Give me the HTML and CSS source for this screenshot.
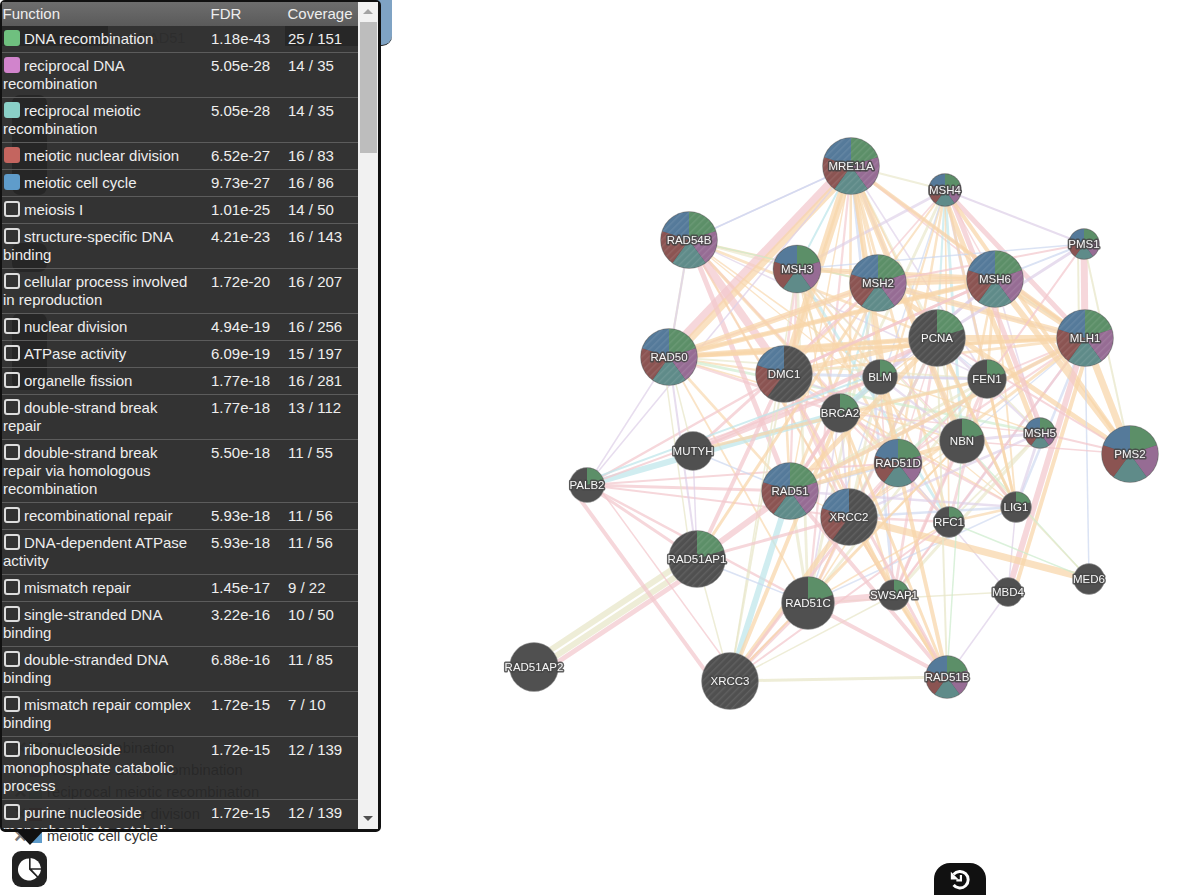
FILE: index.html
```html
<!DOCTYPE html>
<html lang="en">
<head>
  <meta charset="UTF-8">
  <meta name="viewport" content="width=device-width, initial-scale=1">
  <title>Gene Network</title>
  <link rel="stylesheet" href="styles.css">
</head>
<body>

  <div class="app">
    <!-- network canvas, filled in by script.js -->
    <svg id="network" class="network" width="1196" height="895" viewBox="0 0 1196 895"></svg>

    <div class="search">
      <div class="search-tools"></div>
      <div class="search-box">e.g. RAD51</div>
      <div class="search-go"></div>
    </div>

    <div class="side">
      <div class="tool tool-a"></div>
      <div class="tool tool-b"></div>
      <div class="tool tool-c"></div>

      <ul class="legend">
        <li><span class="cross">×</span><i class="chip green"></i>DNA recombination</li>
        <li><span class="cross">×</span><i class="chip purple"></i>reciprocal DNA recombination</li>
        <li><span class="cross">×</span><i class="chip teal"></i>reciprocal meiotic recombination</li>
        <li><span class="cross">×</span><i class="chip red"></i>meiotic nuclear division</li>
        <li><span class="cross">×</span><i class="chip blue"></i>meiotic cell cycle</li>
      </ul>

      <button class="pie-btn" aria-label="Functions">
        <svg width="24" height="24" viewBox="0 0 24 24">
          <path fill="#fff" d="M11 1.5V12.5L18.8 20.2A11 11 0 1 1 11 1.5Z"/>
          <path fill="#fff" d="M12.6 1A11 11 0 0 1 23 11.2H12.6Z"/>
          <path fill="#fff" d="M14 12.8H23A11 11 0 0 1 20 19.2Z"/>
        </svg>
      </button>
    </div>

    <button class="restore" aria-label="Restore">
      <svg width="24" height="24" viewBox="0 0 24 24">
        <path fill="none" stroke="#fff" stroke-width="3.2" d="M5 18.5A9 9 0 1 0 5 7"/>
        <path fill="#fff" d="M2 4V12.5H10.5Z"/>
        <path fill="none" stroke="#fff" stroke-width="2.4" d="M13 7.5V13.5H8"/>
      </svg>
    </button>

    <div class="panel">
      <div class="table-wrap">
        <table class="fn-table">
          <colgroup>
            <col class="col-fn">
            <col class="col-fdr">
            <col class="col-cov">
          </colgroup>
          <thead>
            <tr><th>Function</th><th>FDR</th><th>Coverage</th></tr>
          </thead>
          <tbody>
            <tr><td><i class="box green"></i>DNA recombination</td><td>1.18e-43</td><td>25 / 151</td></tr>
            <tr><td><i class="box purple"></i>reciprocal DNA recombination</td><td>5.05e-28</td><td>14 / 35</td></tr>
            <tr><td><i class="box teal"></i>reciprocal meiotic recombination</td><td>5.05e-28</td><td>14 / 35</td></tr>
            <tr><td><i class="box red"></i>meiotic nuclear division</td><td>6.52e-27</td><td>16 / 83</td></tr>
            <tr><td><i class="box blue"></i>meiotic cell cycle</td><td>9.73e-27</td><td>16 / 86</td></tr>
            <tr><td><i class="box"></i>meiosis I</td><td>1.01e-25</td><td>14 / 50</td></tr>
            <tr><td><i class="box"></i>structure-specific DNA binding</td><td>4.21e-23</td><td>16 / 143</td></tr>
            <tr><td><i class="box"></i>cellular process involved in reproduction</td><td>1.72e-20</td><td>16 / 207</td></tr>
            <tr><td><i class="box"></i>nuclear division</td><td>4.94e-19</td><td>16 / 256</td></tr>
            <tr><td><i class="box"></i>ATPase activity</td><td>6.09e-19</td><td>15 / 197</td></tr>
            <tr><td><i class="box"></i>organelle fission</td><td>1.77e-18</td><td>16 / 281</td></tr>
            <tr><td><i class="box"></i>double-strand break repair</td><td>1.77e-18</td><td>13 / 112</td></tr>
            <tr><td><i class="box"></i>double-strand break repair via homologous recombination</td><td>5.50e-18</td><td>11 / 55</td></tr>
            <tr><td><i class="box"></i>recombinational repair</td><td>5.93e-18</td><td>11 / 56</td></tr>
            <tr><td><i class="box"></i>DNA-dependent ATPase activity</td><td>5.93e-18</td><td>11 / 56</td></tr>
            <tr><td><i class="box"></i>mismatch repair</td><td>1.45e-17</td><td>9 / 22</td></tr>
            <tr><td><i class="box"></i>single-stranded DNA binding</td><td>3.22e-16</td><td>10 / 50</td></tr>
            <tr><td><i class="box"></i>double-stranded DNA binding</td><td>6.88e-16</td><td>11 / 85</td></tr>
            <tr><td><i class="box"></i>mismatch repair complex binding</td><td>1.72e-15</td><td>7 / 10</td></tr>
            <tr><td><i class="box"></i>ribonucleoside monophosphate catabolic process</td><td>1.72e-15</td><td>12 / 139</td></tr>
            <tr><td><i class="box"></i>purine nucleoside monophosphate catabolic process</td><td>1.72e-15</td><td>12 / 139</td></tr>
          </tbody>
        </table>
      </div>
      <div class="scroll">
        <div class="scroll-up"></div>
        <div class="scroll-thumb"></div>
        <div class="scroll-down"></div>
      </div>
    </div>
  </div>

  <script src="script.js"></script>
</body>
</html>
```

FILE: styles.css
```css
body {
  margin: 0;
  background-color: #fff;
  font-family: "Liberation Sans", Arial, sans-serif;
  font-size: 15px;
}
.app {
  position: relative;
  width: 1196px;
  height: 895px;
  overflow: hidden;
}
.network {
  position: absolute;
  left: 0;
  top: 0;
  filter: blur(0.35px);
}
.node-label {
  font-family: "Liberation Sans", Arial, sans-serif;
  font-size: 11.5px;
  fill: #f6f6f6;
  stroke: rgba(70, 70, 70, 0.85);
  stroke-width: 3px;
  paint-order: stroke;
  stroke-linejoin: round;
  text-anchor: middle;
  dominant-baseline: central;
}

/* search bar, mostly hidden by the panel */
.search {
  position: relative;
  display: flex;
  width: 392px;
  height: 46px;
}
.search-tools {
  width: 108px;
  margin-top: 26px;
  background-color: #1e1e1e;
}
.search-box {
  width: 177px;
  padding: 30px 0 0 2px;
  box-sizing: border-box;
  color: #8a8a8a;
  font-size: 14.6px;
}
.search-go {
  flex: 1;
  margin-top: -1px;
  background: linear-gradient(to right, #1e1e1e 85px, #7fa3c4 85px);
  border-bottom: 1px solid #222;
  border-bottom-right-radius: 10px;
}

/* left column under the panel */
.side {
  position: absolute;
  left: 0;
  top: 0;
  height: 887px;
  display: flex;
  flex-direction: column;
  align-items: flex-start;
}
.tool {
  width: 35px;
  margin-left: 12px;
  background-color: #111;
  border-radius: 8px;
}
.tool-a { height: 100px; margin-top: 95px; }
.tool-b { height: 29px; margin-top: 48px; }
.tool-c { height: 77px; margin-top: 41px; }
.legend {
  list-style: none;
  margin: auto 0 4px;
  padding: 0;
  color: #333;
  font-size: 14.8px;
}
.legend li {
  display: flex;
  align-items: center;
  height: 22px;
  white-space: nowrap;
}
.cross {
  width: 15px;
  margin-left: 14px;
  color: #777;
  font-size: 22px;
  font-weight: bold;
  line-height: 1;
}
.chip {
  width: 13px;
  height: 13px;
  margin-right: 5px;
}
.pie-btn {
  display: flex;
  align-items: center;
  justify-content: center;
  width: 35px;
  height: 36px;
  margin: 0 0 0 12px;
  padding: 0;
  border: none;
  border-radius: 9px;
  background-color: #222;
}
.restore {
  position: absolute;
  left: 934px;
  bottom: 0;
  display: flex;
  justify-content: center;
  align-items: center;
  width: 52px;
  height: 32px;
  padding: 0;
  border: none;
  border-radius: 16px 16px 0 0;
  background-color: #111;
}
.restore svg {
  width: 22px;
  height: 22px;
}

/* function enrichment panel */
.panel {
  position: absolute;
  left: 0;
  top: 0;
  display: flex;
  width: 381px;
  height: 832px;
  box-sizing: border-box;
  border: solid #111;
  border-width: 2px 3px 3px 2px;
  border-radius: 5px;
  background-color: rgba(40, 40, 40, 0.95);
  color: #eee;
}
.panel::after {
  content: "";
  position: absolute;
  left: 13px;
  top: 827px;
  border: solid transparent;
  border-width: 16px 15px 0;
  border-top-color: #111;
}
.table-wrap {
  width: 356px;
  overflow: hidden;
}
.fn-table {
  width: 356px;
  table-layout: fixed;
  border-collapse: collapse;
  line-height: 18px;
}
.col-fn { width: 208px; }
.col-fdr { width: 77px; }
.col-cov { width: 71px; }
.fn-table th {
  height: 24px;
  padding: 0 0 0 0.5px;
  text-align: left;
  font-weight: normal;
  background: linear-gradient(#6e6e6e, #5a5a5a);
}
.fn-table td {
  padding: 4px 15px 4px 1px;
  vertical-align: top;
  border-bottom: 1px solid #5c5c5c;
}
.fn-table td + td {
  padding-right: 0;
}
.box {
  display: inline-block;
  width: 12px;
  height: 12px;
  margin: 0 4px 0 1px;
  vertical-align: -2px;
  border: 2px solid #ddd;
  border-radius: 3px;
}
.box.green, .box.purple, .box.teal, .box.red, .box.blue {
  border-color: transparent;
}
.green { background-color: #6fc07f; }
.purple { background-color: #d184cc; }
.teal { background-color: #8ad0c8; }
.red { background-color: #c4655f; }
.blue { background-color: #5f9ccb; }
.scroll {
  flex: 1;
  position: relative;
  background-color: #f1f1f1;
}
.scroll-up, .scroll-down {
  position: absolute;
  left: 5px;
  border: solid transparent;
  border-width: 0 5px;
}
.scroll-up {
  top: 7px;
  border-bottom: 5px solid #a3a3a3;
}
.scroll-down {
  bottom: 8px;
  border-top: 5px solid #505050;
}
.scroll-thumb {
  position: absolute;
  left: 2px;
  top: 20px;
  width: 17px;
  height: 131px;
  background-color: #bdbdbd;
}
```

FILE: script.js
```javascript
// gene nodes: name, x, y, radius, slices, hatched
const nodes = [
  ['MRE11A', 851, 166, 28, 'all', 1], ['MSH4', 945, 190, 16, 'all', 0],
  ['PMS1', 1084, 244, 15, 'all', 0], ['RAD54B', 689, 240, 28, 'all', 1],
  ['MSH3', 797, 269, 23.5, 'all', 0], ['MSH2', 878, 283, 28, 'all', 1],
  ['MSH6', 995, 279, 28, 'all', 1], ['PCNA', 937, 338, 28, 'g', 1],
  ['MLH1', 1085, 338, 28, 'all', 1], ['RAD50', 669, 357, 28, 'all', 1],
  ['DMC1', 784, 374, 28, 'rb', 1], ['BLM', 880, 377, 17, 'g', 0],
  ['FEN1', 987, 379, 19, 'g', 0], ['BRCA2', 840, 413, 19, 'g', 0],
  ['NBN', 962, 441, 22, 'g', 0], ['MSH5', 1040, 433, 15, 'all', 0],
  ['PMS2', 1130, 454, 28, 'all', 0], ['MUTYH', 693, 451, 19, 'none', 0],
  ['RAD51D', 898, 463, 23.5, 'all', 0], ['PALB2', 587, 485, 17, 'g', 0],
  ['RAD51', 790, 491, 28, 'all', 1], ['XRCC2', 849, 517, 28, 'rb', 1],
  ['LIG1', 1016, 507, 15, 'g', 0], ['RFC1', 949, 522, 15, 'g', 0],
  ['RAD51AP1', 697, 559, 28, 'g', 1], ['RAD51C', 808, 603, 26, 'g', 0],
  ['SWSAP1', 894, 595, 15, 'g', 0], ['MBD4', 1008, 592, 14, 'none', 0],
  ['MED6', 1089, 579, 15, 'none', 0], ['RAD51AP2', 534, 667, 24, 'none', 0],
  ['XRCC3', 730, 681, 28, 'none', 1], ['RAD51B', 947, 677, 21, 'all', 0]
];

const edgeColors = {
  o: '#f8d6aa', p: '#f3c8cd', v: '#ded0e8', b: '#cdd8f0',
  c: '#bee6eb', g: '#cdeccd', k: '#e8e6c8'
};

// the edges that can be told apart in the picture: a, b, colour, width, offset
const strongEdges = [
  ['MRE11A', 'RAD50', 'p', 9, 3], ['MRE11A', 'RAD50', 'o', 7, -3], ['MRE11A', 'DMC1', 'o', 9, 0],
  ['MRE11A', 'RAD54B', 'b', 1.5, 0], ['RAD54B', 'DMC1', 'p', 8, 0], ['RAD54B', 'RAD51', 'p', 5, 0],
  ['RAD54B', 'MSH2', 'g', 1.5, 0], ['RAD54B', 'RAD50', 'v', 2, 0], ['MRE11A', 'MSH3', 'c', 2, 0],
  ['MSH2', 'MSH6', 'o', 7, 0], ['MSH3', 'MSH6', 'o', 5, 0], ['MSH2', 'MLH1', 'o', 6, 0],
  ['MSH6', 'MLH1', 'o', 6, 0], ['MSH6', 'PMS2', 'o', 6, 0], ['MLH1', 'PMS2', 'o', 7, 0],
  ['PCNA', 'MLH1', 'o', 6, 0], ['MSH2', 'PMS2', 'o', 5, 0], ['MSH4', 'MSH5', 'o', 5, 3],
  ['MSH4', 'MSH5', 'p', 5, -3], ['MSH4', 'MLH1', 'p', 5, 0], ['MSH4', 'PMS1', 'v', 2, 0],
  ['MSH4', 'PMS2', 'o', 4, 0], ['PMS1', 'MLH1', 'p', 7, 0], ['PMS1', 'MLH1', 'k', 2, 6],
  ['PMS1', 'PMS2', 'k', 2, 0], ['PMS1', 'MSH2', 'p', 2, 0], ['PMS1', 'MSH6', 'b', 2, 0],
  ['PMS1', 'PCNA', 'v', 3, 0], ['PMS1', 'MSH3', 'b', 1.5, 0], ['PMS1', 'FEN1', 'p', 2, 0],
  ['MBD4', 'MLH1', 'p', 6, 0], ['MBD4', 'MLH1', 'o', 4, 6], ['MBD4', 'LIG1', 'v', 1.5, 0],
  ['MBD4', 'RAD51D', 'v', 1.5, 0], ['MBD4', 'RAD51C', 'k', 1.5, 0], ['MBD4', 'RAD51B', 'v', 1.5, 0],
  ['XRCC2', 'MED6', 'o', 7, 0], ['MED6', 'MLH1', 'b', 1.5, 0], ['MED6', 'NBN', 'g', 1.5, 0],
  ['MED6', 'RFC1', 'g', 1.5, 0], ['MED6', 'MSH3', 'k', 1.5, 0], ['PMS2', 'MSH5', 'p', 2, 0],
  ['PMS2', 'PCNA', 'p', 2, 0], ['PMS2', 'NBN', 'p', 1.5, 0],
  ['RAD51AP2', 'RAD51AP1', 'k', 6, -5], ['RAD51AP2', 'RAD51AP1', 'k', 6, 3], ['RAD51AP2', 'RAD51AP1', 'p', 5, 9],
  ['PALB2', 'BRCA2', 'c', 6, 0], ['PALB2', 'RAD51', 'p', 3, 0], ['PALB2', 'RAD51C', 'p', 2.5, 0],
  ['PALB2', 'XRCC2', 'p', 2, 0], ['PALB2', 'RAD51D', 'p', 2, 0], ['PALB2', 'DMC1', 'p', 2.5, 0],
  ['PALB2', 'RAD50', 'v', 1.5, 0], ['PALB2', 'XRCC3', 'p', 1.5, -8], ['PALB2', 'XRCC3', 'p', 4, 14],
  ['PALB2', 'RAD51AP1', 'p', 3, 0], ['PALB2', 'BLM', 'p', 2, 0], ['PALB2', 'MRE11A', 'v', 1.5, 0],
  ['MUTYH', 'BLM', 'p', 4, 0], ['MUTYH', 'PCNA', 'p', 4, 0], ['MUTYH', 'MSH2', 'p', 3, 0],
  ['MUTYH', 'FEN1', 'o', 3, 0], ['MUTYH', 'RAD51', 'b', 1.5, 0], ['MUTYH', 'RAD50', 'k', 1.5, 0],
  ['MUTYH', 'RAD51AP1', 'v', 1.5, 0], ['RAD50', 'RAD51AP1', 'v', 2, 0], ['RAD50', 'RAD51AP1', 'k', 1.5, 6],
  ['XRCC3', 'RAD51', 'c', 6, 0], ['XRCC3', 'XRCC2', 'o', 5, 0], ['XRCC3', 'RAD51B', 'k', 3, 0],
  ['XRCC3', 'RAD51C', 'p', 4, 0], ['XRCC3', 'RAD51D', 'p', 3, 0], ['XRCC3', 'BRCA2', 'o', 4, 0],
  ['XRCC3', 'RFC1', 'p', 2, 0], ['XRCC3', 'DMC1', 'k', 2, 0], ['XRCC3', 'SWSAP1', 'k', 1.5, 0],
  ['XRCC3', 'MSH3', 'k', 1.5, 0], ['XRCC3', 'RAD51AP1', 'k', 1.5, 0], ['XRCC3', 'NBN', 'o', 2, 0],
  ['RAD51C', 'SWSAP1', 'p', 7, 0], ['RAD51AP1', 'RAD51', 'p', 6, 0], ['RAD51AP1', 'XRCC2', 'p', 3, 0],
  ['RAD51AP1', 'RAD51C', 'b', 1.5, 0], ['RAD51AP1', 'DMC1', 'p', 4, 0], ['RAD51AP1', 'MSH2', 'o', 3, 0],
  ['RAD51', 'RAD51B', 'p', 4, 0], ['XRCC2', 'RAD51B', 'o', 5, 0], ['RAD51C', 'RAD51B', 'p', 4, 0],
  ['RAD51D', 'RAD51B', 'o', 4, 0], ['SWSAP1', 'RAD51B', 'o', 3, 0], ['NBN', 'RAD51B', 'g', 1.5, 0],
  ['PCNA', 'RAD51B', 'k', 2, 0], ['BRCA2', 'RAD51B', 'o', 3, 0], ['DMC1', 'RAD51B', 'p', 3, 0],
  ['NBN', 'LIG1', 'p', 3, 0], ['PCNA', 'LIG1', 'o', 3, 0], ['FEN1', 'LIG1', 'o', 3, 0],
  ['BLM', 'PALB2', 'c', 2, 4], ['BRCA2', 'BLM', 'c', 6, 0],
  ['RAD50', 'MSH2', 'o', 6, 0], ['RAD50', 'MSH6', 'o', 5, 0], ['RAD50', 'PCNA', 'o', 5, 0],
  ['RAD50', 'MLH1', 'o', 4, 0], ['DMC1', 'PCNA', 'o', 5, 0], ['DMC1', 'MSH6', 'p', 3, 0],
  ['RAD51', 'PCNA', 'o', 5, 0], ['RAD51', 'MLH1', 'o', 4, 0], ['MRE11A', 'RAD51D', 'o', 5, 0],
  ['MRE11A', 'NBN', 'o', 6, 0], ['MRE11A', 'MLH1', 'o', 4, 0], ['RAD51', 'BRCA2', 'p', 4, 0],
  ['RAD51', 'NBN', 'o', 4, 0]
];

// everything else in the dense middle is a plain mesh of thin lines
const meshNames = ['MRE11A', 'MSH4', 'RAD54B', 'MSH3', 'MSH2', 'MSH6', 'PCNA', 'MLH1', 'RAD50', 'DMC1',
  'BLM', 'FEN1', 'BRCA2', 'NBN', 'MSH5', 'RAD51D', 'RAD51', 'XRCC2', 'LIG1', 'RFC1', 'RAD51C', 'SWSAP1'];
const meshColors = 'oooooooppppppvvvbbkkgc';

let seed = 17;
function rand() {
  seed = (seed * 1664525 + 1013904223) % 4294967296;
  return seed / 4294967296;
}

const SVG_NS = 'http://www.w3.org/2000/svg';
const svg = document.getElementById('network');
const byName = {};
nodes.forEach(n => { byName[n[0]] = n; });

function add(parent, tag, attrs) {
  const el = document.createElementNS(SVG_NS, tag);
  Object.keys(attrs).forEach(k => el.setAttribute(k, attrs[k]));
  parent.appendChild(el);
  return el;
}

function drawEdge(a, b, color, width, offset, alpha) {
  const dx = b[1] - a[1];
  const dy = b[2] - a[2];
  const len = Math.hypot(dx, dy);
  const ox = -dy / len * offset;
  const oy = dx / len * offset;
  add(svg, 'line', {
    x1: a[1] + ox, y1: a[2] + oy, x2: b[1] + ox, y2: b[2] + oy,
    stroke: edgeColors[color], 'stroke-width': width, opacity: alpha
  });
}

function wedge(r, from, to) {
  const rad = d => (d - 90) * Math.PI / 180;
  const x1 = Math.cos(rad(from)) * r;
  const y1 = Math.sin(rad(from)) * r;
  const x2 = Math.cos(rad(to)) * r;
  const y2 = Math.sin(rad(to)) * r;
  return 'M0 0L' + x1 + ' ' + y1 + 'A' + r + ' ' + r + ' 0 0 1 ' + x2 + ' ' + y2 + 'Z';
}

function drawNode(n) {
  const g = add(svg, 'g', { transform: 'translate(' + n[1] + ' ' + n[2] + ')' });
  const r = n[3];
  add(g, 'circle', { r: r + 0.5, fill: '#505050', stroke: 'rgba(160,160,160,0.5)', 'stroke-width': 1 });
  const green = '#5c8f68', purple = '#966c94', teal = '#5f8b89', red = '#8b5452', blue = '#557a9a';
  let slices = [];
  if (n[4] === 'all') slices = [[0, green], [72, purple], [144, teal], [216, red], [288, blue]];
  if (n[4] === 'rb') slices = [[216, red], [288, blue]];
  if (n[4] === 'g') slices = [[0, green]];
  slices.forEach(s => add(g, 'path', { d: wedge(r, s[0], s[0] + 72), fill: s[1] }));
  if (n[5]) add(g, 'circle', { r: r, fill: 'url(#hatch)' });
  const label = add(g, 'text', { class: 'node-label' });
  label.textContent = n[0];
}

// hatching on the query genes
const defs = add(svg, 'defs', {});
const hatch = add(defs, 'pattern', {
  id: 'hatch', width: 5, height: 5, patternUnits: 'userSpaceOnUse', patternTransform: 'rotate(45)'
});
add(hatch, 'rect', { width: 1.4, height: 5, fill: 'rgba(255,255,255,0.09)' });

for (let i = 0; i < meshNames.length; i++) {
  for (let j = i + 1; j < meshNames.length; j++) {
    if (rand() > 0.62) continue;
    const color = meshColors[Math.floor(rand() * meshColors.length)];
    drawEdge(byName[meshNames[i]], byName[meshNames[j]], color, 1.2 + rand() * 2, 0, 0.65);
  }
}
strongEdges.forEach(e => drawEdge(byName[e[0]], byName[e[1]], e[2], e[3], e[4], 0.72));
nodes.forEach(drawNode);
```
